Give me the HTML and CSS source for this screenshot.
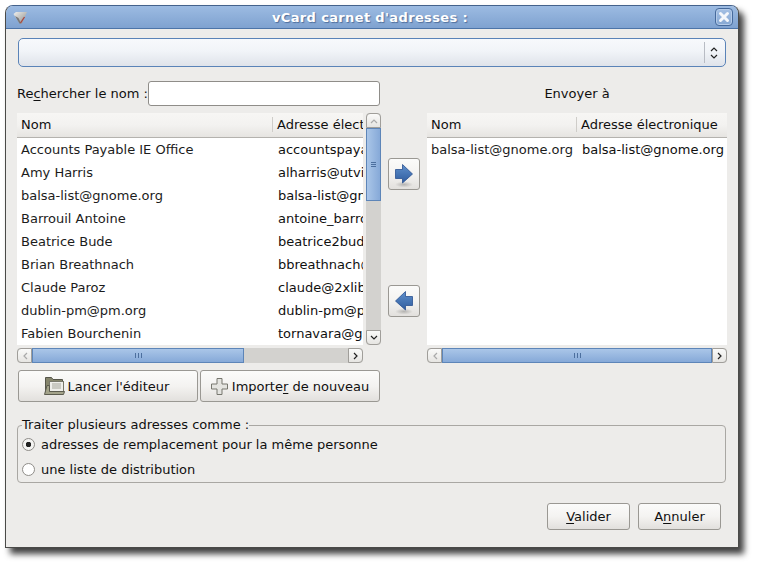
FILE: index.html
```html
<!DOCTYPE html>
<html lang="fr">
<head>
  <meta charset="UTF-8" />
  <title>vCard carnet d'adresses</title>
  <link rel="stylesheet" href="styles.css">
</head>
<body>
  <div class="window">
    <div class="titlebar">
      <svg class="app-icon" width="15" height="13" viewBox="0 0 15 13">
        <defs>
          <linearGradient id="gem" x1="0" y1="0" x2="1" y2="1">
            <stop offset="0" stop-color="#f0f0ee"/>
            <stop offset="0.6" stop-color="#b4b4b1"/>
            <stop offset="1" stop-color="#7d7d7a"/>
          </linearGradient>
        </defs>
        <path d="M0.5 3 L3 1 L14 1 L9 12.5 L6.5 12.5 Z" fill="url(#gem)"/>
        <path d="M2 5 L6.5 12.5 L8 12.5 L5.5 7 Z" fill="#77777a"/>
        <path d="M7.5 12 L11.5 6" stroke="#a8453f" stroke-width="1.3" fill="none"/>
      </svg>
      <span class="title">vCard carnet d'adresses :</span>
      <span class="close-btn">
        <svg width="12" height="12" viewBox="0 0 12 12"><path d="M2.5 2.5 L9.5 9.5 M9.5 2.5 L2.5 9.5" stroke="#f4f7fb" stroke-width="3" stroke-linecap="round" fill="none"/></svg>
      </span>
    </div>

    <div class="content">
      <div class="combo">
        <span class="combo-sep"></span>
        <svg width="8" height="14" viewBox="0 0 8 14"><path d="M1 5 L4 2 L7 5 M1 9 L4 12 L7 9" stroke="#222" stroke-width="1.2" fill="none"/></svg>
      </div>

      <div class="columns">
        <div class="col-left">
          <div class="search-row">
            <label for="search">Re<u>c</u>hercher le nom :</label>
            <input type="text" id="search" />
          </div>

          <div class="tree-wrap">
            <div class="tree tree-left">
              <div class="tree-head"><span class="cell-name">Nom</span><span class="cell-mail">Adresse électronique</span></div>
              <div class="row"><span class="cell-name">Accounts Payable IE Office</span><span class="cell-mail">accountspayable@ie.org</span></div>
              <div class="row"><span class="cell-name">Amy Harris</span><span class="cell-mail">alharris@utvinternet.com</span></div>
              <div class="row"><span class="cell-name">balsa-list@gnome.org</span><span class="cell-mail">balsa-list@gnome.org</span></div>
              <div class="row"><span class="cell-name">Barrouil Antoine</span><span class="cell-mail">antoine_barrouil@free.fr</span></div>
              <div class="row"><span class="cell-name">Beatrice Bude</span><span class="cell-mail">beatrice2bude@free.fr</span></div>
              <div class="row"><span class="cell-name">Brian Breathnach</span><span class="cell-mail">bbreathnach@gmail.com</span></div>
              <div class="row"><span class="cell-name">Claude Paroz</span><span class="cell-mail">claude@2xlibre.net</span></div>
              <div class="row"><span class="cell-name">dublin-pm@pm.org</span><span class="cell-mail">dublin-pm@pm.org</span></div>
              <div class="row"><span class="cell-name">Fabien Bourchenin</span><span class="cell-mail">tornavara@gmail.com</span></div>
            </div>
            <div class="vscroll">
              <span class="sb-btn sb-up"><svg width="8" height="6" viewBox="0 0 8 6"><path d="M1 5 L4 2 L7 5" stroke="#aaa" stroke-width="1.2" fill="none"/></svg></span>
              <span class="vthumb"><i></i><i></i><i></i></span>
              <span class="vtrack"></span>
              <span class="sb-btn sb-down"><svg width="8" height="6" viewBox="0 0 8 6"><path d="M1 1 L4 4 L7 1" stroke="#222" stroke-width="1.2" fill="none"/></svg></span>
            </div>
          </div>

          <div class="hscroll hscroll-left">
            <span class="sb-btn sb-left"><svg width="6" height="8" viewBox="0 0 6 8"><path d="M5 1 L2 4 L5 7" stroke="#aaa" stroke-width="1.2" fill="none"/></svg></span>
            <span class="hthumb"><i></i><i></i><i></i></span>
            <span class="htrack"></span>
            <span class="sb-btn sb-right"><svg width="6" height="8" viewBox="0 0 6 8"><path d="M1 1 L4 4 L1 7" stroke="#222" stroke-width="1.2" fill="none"/></svg></span>
          </div>

          <div class="left-buttons">
            <button type="button" class="btn btn-editor">
              <svg width="21" height="20" viewBox="0 0 21 20">
                <path d="M1.5 1.5 L7.5 1.5 L9 3.5 L18.5 3.5 L18.5 17.5 L1.5 17.5 Z" fill="#85856c" stroke="#55554a"/>
                <rect x="5.5" y="5.5" width="14" height="10" fill="#eeeeea" stroke="#77776a"/>
                <path d="M8 8 H17 M8 10 H17 M8 12 H17" stroke="#a5a59b"/>
                <path d="M0.5 18.5 L3 9.5 L5.5 9.5 L5.5 15.5 L20.5 15.5 L19.5 18.5 Z" fill="#a3a38a" stroke="#5c5c4f"/>
              </svg>
              <span>Lancer l'éditeur</span>
            </button>
            <button type="button" class="btn btn-import">
              <svg width="17" height="17" viewBox="0 0 17 17"><path d="M6 0.5 H11 V6 H16.5 V11 H11 V16.5 H6 V11 H0.5 V6 H6 Z" fill="#e4e4e0" stroke="#77776f"/></svg>
              <span>Importe<u>r</u> de nouveau</span>
            </button>
          </div>
        </div>

        <div class="col-mid">
          <button type="button" class="arrow-btn">
            <svg width="18" height="24" viewBox="0 0 18 24">
              <defs>
                <linearGradient id="arrow-fill" x1="0" y1="0" x2="0" y2="1">
                  <stop offset="0" stop-color="#5f90cc"/>
                  <stop offset="1" stop-color="#2f5c9e"/>
                </linearGradient>
                <radialGradient id="arrow-shadow">
                  <stop offset="0" stop-color="#000" stop-opacity="0.22"/>
                  <stop offset="1" stop-color="#000" stop-opacity="0"/>
                </radialGradient>
              </defs>
              <ellipse cx="9" cy="20.5" rx="9" ry="3" fill="url(#arrow-shadow)"/>
              <path d="M0.5 5.5 H7.5 V0.5 L17.5 10 L7.5 19 V14.5 H0.5 Z" fill="url(#arrow-fill)" stroke="#2a5190" stroke-width="0.8"/>
            </svg>
          </button>
          <button type="button" class="arrow-btn">
            <svg width="18" height="24" viewBox="0 0 18 24">
              <ellipse cx="9" cy="20.5" rx="9" ry="3" fill="url(#arrow-shadow)"/>
              <path d="M17.5 5.5 H10.5 V0.5 L0.5 10 L10.5 19 V14.5 H17.5 Z" fill="url(#arrow-fill)" stroke="#2a5190" stroke-width="0.8"/>
            </svg>
          </button>
        </div>

        <div class="col-right">
          <div class="send-label">Envoyer à</div>
          <div class="tree tree-right">
            <div class="tree-head"><span class="cell-name-r">Nom</span><span class="cell-mail">Adresse électronique</span></div>
            <div class="row"><span class="cell-name-r">balsa-list@gnome.org</span><span class="cell-mail">balsa-list@gnome.org</span></div>
          </div>
          <div class="hscroll">
            <span class="sb-btn sb-left"><svg width="6" height="8" viewBox="0 0 6 8"><path d="M5 1 L2 4 L5 7" stroke="#aaa" stroke-width="1.2" fill="none"/></svg></span>
            <span class="hthumb hthumb-full"><i></i><i></i><i></i></span>
            <span class="sb-btn sb-right"><svg width="6" height="8" viewBox="0 0 6 8"><path d="M1 1 L4 4 L1 7" stroke="#222" stroke-width="1.2" fill="none"/></svg></span>
          </div>
        </div>
      </div>

      <fieldset class="frame">
        <legend>Traiter plusieurs adresses comme :</legend>
        <label class="radio-row"><span class="radio radio-on"></span>adresses de remplacement pour la même personne</label>
        <label class="radio-row"><span class="radio"></span>une liste de distribution</label>
      </fieldset>

      <div class="actions">
        <button type="button" class="btn btn-action"><span><u>V</u>alider</span></button>
        <button type="button" class="btn btn-action"><span>A<u>n</u>nuler</span></button>
      </div>
    </div>
  </div>
</body>
</html>
```

FILE: styles.css
```css
* {
  box-sizing: border-box;
}
html, body {
  margin: 0;
  padding: 0;
  background-color: #fff;
}
body {
  width: 758px;
  height: 567px;
  padding: 5px 0 0 5px;
  overflow: hidden;
  font-family: "DejaVu Sans", sans-serif;
  font-size: 13px;
  color: #101010;
}
u {
  text-underline-offset: 2px;
}

/* window frame */
.window {
  width: 734px;
  height: 543px;
  background-color: #edecea;
  border: 1px solid #4a4a48;
  border-top-color: #44628c;
  border-radius: 8px 8px 0 0;
  box-shadow: 5px 6px 6px rgba(0, 0, 0, 0.75);
  display: flex;
  flex-direction: column;
}
.titlebar {
  height: 23px;
  flex: none;
  background: linear-gradient(#9cbbe2, #7fa2d0);
  border-bottom: 1px solid #4c74a8;
  border-radius: 7px 7px 0 0;
  display: flex;
  align-items: center;
  padding: 0 5px 0 7px;
}
.title {
  flex: 1;
  text-align: center;
  color: #fff;
  font-weight: bold;
  font-size: 13px;
  letter-spacing: 0.36px;
  text-shadow: 1px 1px 1px #4f6f9c;
  padding-right: 3px;
}
.close-btn {
  width: 18px;
  height: 18px;
  border: 1px solid #466a9c;
  border-radius: 4px;
  background: linear-gradient(#a4c0e4, #86a8d3);
  box-shadow: inset 0 0 0 1px #b4cbe9;
  display: flex;
  align-items: center;
  justify-content: center;
}

.content {
  flex: 1;
  padding: 9px 11px 0 11px;
  display: flex;
  flex-direction: column;
}

/* top combo */
.combo {
  height: 29px;
  margin: 0 0 0 1px;
  width: 708px;
  border: 1px solid #5a83b8;
  border-radius: 5px;
  background: linear-gradient(#f7f9fc 0%, #f1f4f8 45%, #dfe3ea 100%);
  display: flex;
  align-items: center;
  justify-content: flex-end;
  padding-right: 7px;
  gap: 5px;
}
.combo-sep {
  width: 1px;
  height: 21px;
  background-color: #b8bcc4;
}

.columns {
  display: flex;
  margin-top: 14px;
}
.col-left {
  width: 364px;
}
.col-mid {
  width: 46px;
  padding: 77px 0 0 7px;
  display: flex;
  flex-direction: column;
  gap: 95px;
}
.col-right {
  width: 300px;
}

.search-row {
  display: flex;
  align-items: center;
  height: 25px;
  gap: 2px;
}
.search-row label {
  width: 129px;
  white-space: nowrap;
}
.search-row input {
  width: 232px;
  height: 25px;
  border: 1px solid #8f8d89;
  border-radius: 3px;
  background-color: #fff;
}
.send-label {
  height: 25px;
  line-height: 25px;
  text-align: center;
}

/* lists */
.tree-wrap {
  display: flex;
  margin-top: 7px;
  gap: 3px;
}
.tree {
  height: 232px;
  background-color: #fff;
  overflow: hidden;
}
.tree-left {
  width: 346px;
}
.tree-right {
  width: 300px;
  margin-top: 7px;
}
.tree-head {
  height: 25px;
  padding-bottom: 1px;
  display: flex;
  align-items: center;
  background: linear-gradient(#f7f6f4, #f3f2f0 50%, #e6e4e1);
  border-bottom: 1px solid #b4b2ae;
  white-space: nowrap;
  overflow: hidden;
}
.tree-head .cell-mail {
  border-left: 1px solid #cfcdc9;
  padding-left: 4px;
}
.row {
  height: 23px;
  display: flex;
  align-items: center;
  white-space: nowrap;
  overflow: hidden;
}
.cell-name {
  flex: none;
  width: 255px;
  padding-left: 4px;
}
.cell-name-r {
  flex: none;
  width: 149px;
  padding-left: 4px;
}
.row .cell-name, .row .cell-name-r {
  color: #1c1c1c;
}
.tree-left .row .cell-name {
  width: 257px;
}
.tree-right .row .cell-name-r {
  width: 151px;
}
.row .cell-mail {
  padding-left: 4px;
}
.tree-left .cell-mail {
  flex: none;
}

/* scrollbars */
.vscroll {
  width: 15px;
  height: 232px;
  display: flex;
  flex-direction: column;
  background-color: #d3d2cf;
  border-radius: 4px;
}
.sb-btn {
  flex: none;
  display: flex;
  align-items: center;
  justify-content: center;
  background: linear-gradient(#fafaf9, #e6e5e2);
  border: 1px solid #a09e9a;
}
.vscroll .sb-btn {
  height: 15px;
}
.sb-up {
  border-radius: 4px 4px 0 0;
}
.sb-down {
  border-radius: 0 0 4px 4px;
}
.vthumb {
  height: 73px;
  flex: none;
  background: linear-gradient(90deg, #aac6e8, #86a9d8);
  border: 1px solid #5d85b8;
  display: flex;
  flex-direction: column;
  align-items: center;
  justify-content: center;
  gap: 1px;
}
.vthumb i {
  width: 5px;
  height: 1px;
  background-color: #4c6f9e;
}
.vtrack, .htrack {
  flex: 1;
}
.hscroll {
  height: 15px;
  margin-top: 3px;
  display: flex;
  background-color: #d3d2cf;
  border-radius: 4px;
}
.hscroll-left {
  width: 346px;
}
.hscroll .sb-btn {
  width: 15px;
}
.sb-left {
  border-radius: 4px 0 0 4px;
}
.sb-right {
  border-radius: 0 4px 4px 0;
}
.hthumb {
  width: 212px;
  flex: none;
  background: linear-gradient(#aac6e8, #86a9d8);
  border: 1px solid #5d85b8;
  display: flex;
  align-items: center;
  justify-content: center;
  gap: 2px;
}
.hthumb-full {
  flex: 1;
}
.hthumb i {
  width: 1px;
  height: 5px;
  background-color: #4c6f9e;
}

/* buttons */
.btn, .arrow-btn {
  font-family: inherit;
  font-size: inherit;
  color: inherit;
  border: 1px solid #9a9893;
  border-radius: 3px;
  background: linear-gradient(#fbfbfa, #f4f3f1 50%, #e2e0dd);
  padding: 0;
  display: flex;
  align-items: center;
  justify-content: center;
}
.left-buttons {
  display: flex;
  gap: 2px;
  margin: 7px 0 0 1px;
}
.left-buttons .btn {
  width: 180px;
  height: 32px;
}
.btn-editor {
  gap: 3px;
  padding-right: 3px;
}
.btn-import {
  gap: 4px;
}
.arrow-btn {
  width: 32px;
  height: 32px;
  padding-top: 4px;
}

/* address type frame */
.frame {
  margin: 16px 0 0 0;
  padding: 0 0 0 4px;
  width: 709px;
  height: 65px;
  border: 1px solid #a9a7a3;
  border-radius: 4px;
}
.frame legend {
  padding: 0;
  line-height: 14px;
}
.radio-row {
  display: flex;
  align-items: center;
  gap: 6px;
  height: 25px;
}
.radio {
  width: 13px;
  height: 13px;
  flex: none;
  border: 1px solid #8f8d89;
  border-radius: 50%;
  background-color: #fff;
}
.radio-on {
  background: radial-gradient(circle, #222 0 2.5px, #f4f4f2 3px);
}

.actions {
  display: flex;
  justify-content: flex-end;
  gap: 8px;
  margin-top: 20px;
  padding-right: 6px;
}
.btn-action {
  width: 83px;
  height: 27px;
}
```
